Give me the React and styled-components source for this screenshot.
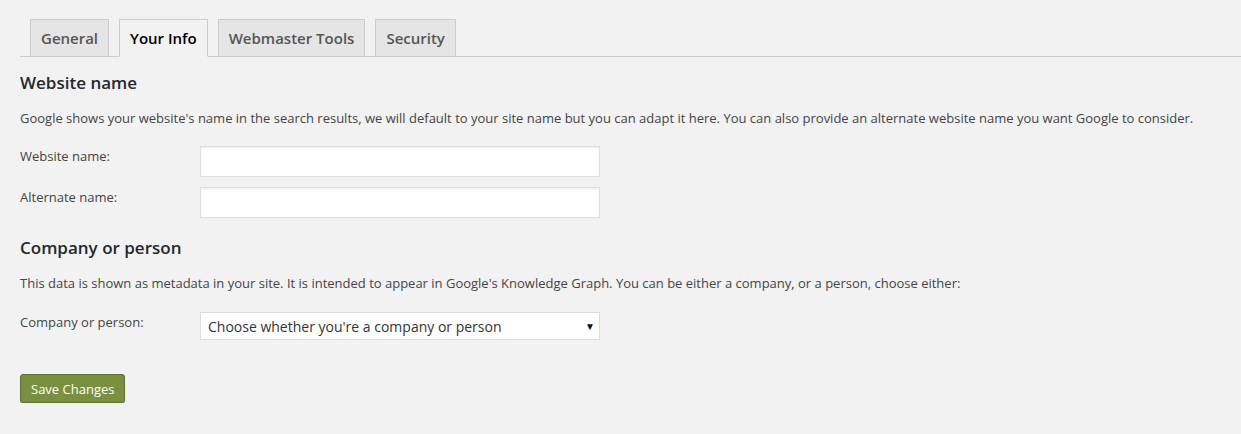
import styled, { createGlobalStyle } from "styled-components";

const GlobalStyle = createGlobalStyle`
  body {
    margin: 0;
    background: #f2f2f2;
    font-family: "Open Sans", "Liberation Sans", sans-serif;
    color: #444;
  }
`;

const Page = styled.div`
  padding: 19px 0 0 20px;
`;

const TabBar = styled.div`
  display: flex;
  gap: 10px;
  padding-left: 10px;
  border-bottom: 1px solid #ccc;
`;

const Tab = styled.div`
  font-size: 15px;
  font-weight: 600;
  line-height: 24px;
  padding: 6px 10px;
  margin-bottom: -1px;
  border: 1px solid #ccc;
  border-bottom-color: ${(p) => (p.active ? "#f2f2f2" : "#ccc")};
  background: ${(p) => (p.active ? "#f2f2f2" : "#e5e5e5")};
  color: ${(p) => (p.active ? "#000" : "#555")};
`;

const Heading = styled.h2`
  margin: ${(p) => p.top}px 0 0;
  font-size: 17px;
  font-weight: 600;
  line-height: 24px;
  color: #23282d;
`;

const Description = styled.p`
  margin: 13px 0 0;
  font-size: 13px;
  line-height: 20px;
`;

const Row = styled.div`
  display: flex;
  align-items: flex-start;
  margin-top: ${(p) => p.top}px;
`;

const Label = styled.label`
  width: 180px;
  font-size: 13px;
  line-height: 20px;
  color: #444;
`;

const TextInput = styled.input`
  box-sizing: border-box;
  width: 400px;
  height: 31px;
  margin: 0;
  border: 1px solid #ddd;
  background: #fff;
  box-shadow: inset 0 1px 2px rgba(0, 0, 0, 0.07);
  outline: none;
`;

const Select = styled.div`
  box-sizing: border-box;
  width: 400px;
  height: 28px;
  display: flex;
  align-items: center;
  justify-content: space-between;
  padding: 0 4px 0 7px;
  border: 1px solid #ddd;
  background: #fff;
  font-size: 14px;
  color: #333;
`;

const Arrow = styled.span`
  font-size: 10px;
  color: #111;
`;

const SaveButton = styled.button`
  margin-top: 34px;
  height: 29px;
  padding: 0 10px;
  font-family: "Open Sans", "Liberation Sans", sans-serif;
  font-size: 13px;
  color: #fff;
  background: #7a8f3f;
  border: 1px solid #5f7030;
  border-radius: 3px;
  box-shadow: 0 1px 0 #b0b0b0;
`;

export default function App() {
  return (
    <Page>
      <GlobalStyle />
      <TabBar>
        <Tab>General</Tab>
        <Tab active>Your Info</Tab>
        <Tab>Webmaster Tools</Tab>
        <Tab>Security</Tab>
      </TabBar>

      <Heading top={14}>Website name</Heading>
      <Description>
        Google shows your website's name in the search results, we will default to your site name but you can adapt it here. You can also provide an alternate website name you want Google to consider.
      </Description>
      <Row top={18}>
        <Label>Website name:</Label>
        <TextInput type="text" />
      </Row>
      <Row top={10}>
        <Label>Alternate name:</Label>
        <TextInput type="text" />
      </Row>

      <Heading top={18}>Company or person</Heading>
      <Description>
        This data is shown as metadata in your site. It is intended to appear in Google's Knowledge Graph. You can be either a company, or a person, choose either:
      </Description>
      <Row top={19}>
        <Label>Company or person:</Label>
        <Select>
          Choose whether you're a company or person
          <Arrow>▼</Arrow>
        </Select>
      </Row>

      <SaveButton>Save Changes</SaveButton>
    </Page>
  );
}
